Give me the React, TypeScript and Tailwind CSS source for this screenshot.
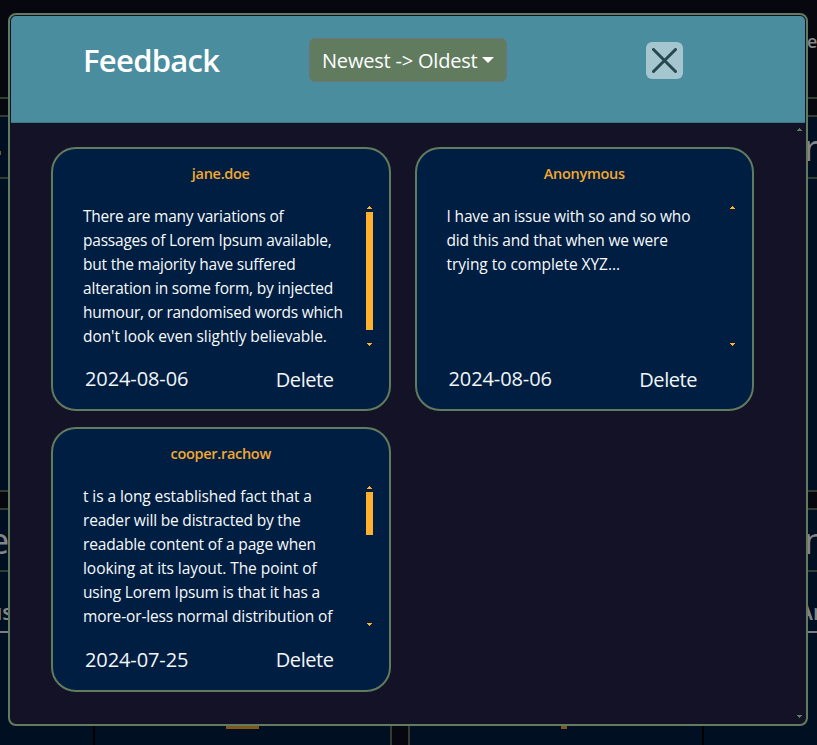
type Line = [text: string, tracking: string];

type Note = {
  author: string;
  lines: Line[];
  date: string;
  thumb: string;
  height: string;
  dateShift: string;
};

const notes: Note[] = [
  {
    author: 'jane.doe',
    lines: [
      ['There are many variations of', 'tracking-[-0.24px]'],
      ['passages of Lorem Ipsum available,', 'tracking-[-0.22px]'],
      ['but the majority have suffered', 'tracking-[-0.22px]'],
      ['alteration in some form, by injected', 'tracking-[-0.19px]'],
      ['humour, or randomised words which', 'tracking-[-0.26px]'],
      ["don't look even slightly believable.", 'tracking-[-0.07px]'],
    ],
    date: '2024-08-06',
    thumb: 'h-[118px]',
    height: 'h-[264px]',
    dateShift: '-mt-px',
  },
  {
    author: 'Anonymous',
    lines: [
      ['I have an issue with so and so who', 'tracking-[-0.15px]'],
      ['did this and that when we were', 'tracking-[-0.17px]'],
      ['trying to complete XYZ...', 'tracking-[-0.04px]'],
    ],
    date: '2024-08-06',
    thumb: 'h-0',
    height: 'h-[264px]',
    dateShift: '-mt-px',
  },
  {
    author: 'cooper.rachow',
    lines: [
      ['t is a long established fact that a', 'tracking-[-0.09px]'],
      ['reader will be distracted by the', 'tracking-[-0.19px]'],
      ['readable content of a page when', 'tracking-[-0.15px]'],
      ['looking at its layout. The point of', 'tracking-[-0.05px]'],
      ['using Lorem Ipsum is that it has a', 'tracking-[-0.17px]'],
      ['more-or-less normal distribution of', 'tracking-[-0.14px]'],
    ],
    date: '2024-07-25',
    thumb: 'h-[43px]',
    height: 'h-[265px]',
    dateShift: '',
  },
];

function Arrow({ down = false, className }: { down?: boolean; className: string }) {
  return (
    <svg width="5" height="3" viewBox="0 0 5 3" shapeRendering="crispEdges" className={className} fill="currentColor">
      {down ? <path d="M0 0h5v1H0zM1 1h3v1H1zM2 2h1v1H2z" /> : <path d="M2 0h1v1H2zM1 1h3v1H1zM0 2h5v1H0z" />}
    </svg>
  );
}

function NoteCard({ note }: { note: Note }) {
  return (
    <article className={`flex flex-col rounded-[25px] border-2 border-[#617b5f] bg-[#001e42] ${note.height}`}>
      <h2 className="mt-[13px] h-6 text-center text-[14.5px] leading-6 font-semibold tracking-[-0.3px] text-[#f2a82f]">
        {note.author}
      </h2>
      <div className="mt-[18px] mr-4 ml-[30px] flex h-36 justify-between">
        <div className="text-[15.5px] leading-6 whitespace-nowrap text-[#f8fafc]">
          {note.lines.map(([text, tracking]) => (
            <p key={text} className={tracking}>
              {text}
            </p>
          ))}
        </div>
        <div className="flex w-[7px] flex-col items-center pt-[2px] pb-[2px] text-[#ffb02e]">
          <Arrow className="shrink-0" />
          <div className={`mt-[3px] w-[7px] shrink-0 bg-[#ffb02e] ${note.thumb}`} />
          <Arrow down className="mt-auto shrink-0" />
        </div>
      </div>
      <div className="mt-[18px] mr-[55px] ml-8 flex justify-between text-[20px] leading-7 text-[#f3f5f7]">
        <span className={`tracking-[-0.1px] ${note.dateShift}`}>{note.date}</span>
        <button className="tracking-[-0.45px]">Delete</button>
      </div>
    </article>
  );
}

function Backdrop() {
  return (
    <div className="flex h-full flex-col bg-[#07070f] text-[#85868a]">
      <div className="flex h-[99px] shrink-0 justify-end border-b-2 border-[#303d2f] pt-[27px]">
        <span className="w-[10px] text-[18px] leading-7 font-semibold">e</span>
      </div>
      <div className="mt-4 h-[377px] shrink-0 border-y-2 border-[#303d2f] bg-[#000f21]">
        <div className="flex h-[62px] items-center justify-between border-b-2 border-[#303d2f] text-[36px]">
          <span className="mt-3 h-1 w-px bg-[#80581a]" />
          <span className="mt-0.5 w-[13px] font-medium">r</span>
        </div>
      </div>
      <div className="mt-4 flex grow gap-4">
        <BackPanel title="e" tab="us" tabClass="-ml-[11px]" titleClass="-ml-[11px]" side="left" />
        <BackPanel title="n" tab="An" tabClass="" titleClass="" side="right" />
      </div>
    </div>
  );
}

function BackPanel({
  title,
  tab,
  tabClass,
  titleClass,
  side,
}: {
  title: string;
  tab: string;
  tabClass: string;
  titleClass: string;
  side: 'left' | 'right';
}) {
  const left = side === 'left';
  return (
    <div
      className={`flex flex-col overflow-hidden border-t-2 border-[#303d2f] bg-[#000f21] ${left ? 'w-[392px] border-r-2' : 'w-[409px] border-l-2'}`}
    >
      <div className={`flex h-[62px] items-center border-b-2 border-[#303d2f] text-[36px] font-medium ${left ? '' : 'justify-end'}`}>
        <span className={`mt-0.5 ${left ? '' : 'w-[13px]'} ${titleClass}`}>{title}</span>
      </div>
      <div className={`flex h-[61px] items-end border-b-2 border-[#7c7c80] pb-[3px] text-[21px] font-semibold ${left ? '' : 'justify-end'}`}>
        <span className={`${left ? '' : 'w-[18px]'} ${tabClass}`}>{tab}</span>
      </div>
      <div className={`flex grow items-end ${left ? 'pl-[93px]' : 'flex-row-reverse pr-[113px]'}`}>
        <div className="h-full w-0.5 bg-black" />
        <div className={`mb-4 h-6 bg-[#80581a] ${left ? 'ml-[131px] w-[33px]' : 'mr-[135px] w-[6px]'}`} />
      </div>
    </div>
  );
}

export default function App() {
  return (
    <main className="relative h-[745px] w-[817px] overflow-hidden font-['Open_Sans','Noto_Sans',sans-serif]">
      <Backdrop />
      <section
        role="dialog"
        className="absolute top-[13px] left-2 flex h-[713px] w-[800px] flex-col overflow-hidden rounded-lg border-2 border-[#617b5f] bg-[#141226] pt-px"
      >
        <header className="mr-px ml-px flex h-[107px] shrink-0 items-start rounded-t-[5px] border-b border-[#3d7685] bg-[#4a8d9e] text-white">
          <h1 className="mt-[21px] ml-[72px] w-[226px] text-[31px] leading-[46px] font-semibold tracking-[-0.7px]">
            Feedback
          </h1>
          <button className="mt-[22px] flex h-11 w-[198px] items-center rounded-md border border-[#6c757d] bg-[#617b5f] pl-3 text-left text-[20px] whitespace-nowrap">
            <span className="mt-px w-[157px] tracking-[-0.2px]">Newest -&gt; Oldest</span>
            <svg width="12" height="6" viewBox="0 0 12 6" fill="currentColor" className="-mt-px ml-[3px]">
              <path d="M0 0h12L6 6z" />
            </svg>
          </button>
          <button aria-label="Close" className="mt-[26px] ml-[139px] flex size-[37px] items-center justify-center rounded-md bg-[#a5c6cf]">
            <svg width="25" height="25" viewBox="0 0 25 25" stroke="#25474f" strokeWidth="3" strokeLinecap="round">
              <path d="M1.5 1.5l22 22M23.5 1.5l-22 22" />
            </svg>
          </button>
        </header>
        <div className="flex min-h-0 grow justify-between pl-[41px]">
          <div className="mt-6 grid w-[703px] grid-cols-2 content-start gap-x-6 gap-y-4">
            {notes.map((note) => (
              <NoteCard key={note.author} note={note} />
            ))}
          </div>
          <div className="mr-1 flex flex-col justify-between pt-[5px] pb-[6px] text-[#617b5f]">
            <Arrow className="" />
            <Arrow down className="" />
          </div>
        </div>
      </section>
    </main>
  );
}
